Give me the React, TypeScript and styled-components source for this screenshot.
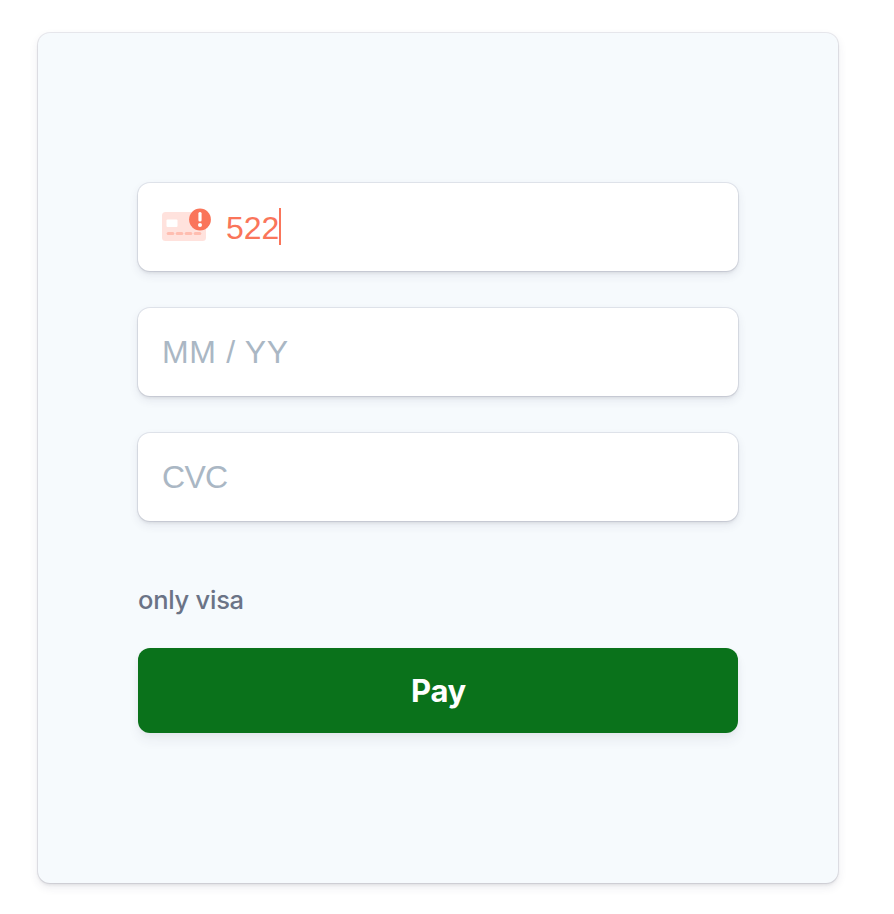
import React from "react";
import styled, { createGlobalStyle } from "styled-components";

const GlobalStyle = createGlobalStyle`
  *, *::before, *::after { box-sizing: border-box; }
  body { margin: 0; background: #ffffff; }
`;

const Page = styled.main`
  min-height: 914px;
  padding: 33px 0 0 38px;
`;

const panelShadow = `0 0 0 1px rgba(50, 50, 93, 0.1),
  0 4px 10px rgba(50, 50, 93, 0.1), 0 2px 3px rgba(0, 0, 0, 0.07)`;

const Card = styled.form`
  display: flex;
  flex-direction: column;
  width: 800px;
  height: 850px;
  padding: 150px 100px 0;
  border-radius: 12px;
  background: #f6fafd;
  box-shadow: ${panelShadow};
`;

const Fields = styled.div`
  display: flex;
  flex-direction: column;
  gap: 37px;
`;

const Field = styled.label`
  display: flex;
  align-items: center;
  height: 88px;
  padding: 0 24px;
  border-radius: 12px;
  background: #ffffff;
  box-shadow: ${panelShadow};
  font: 32px/38px "Liberation Sans", Arial, sans-serif;
`;

const Input = styled.input<{ $spacing: number }>`
  flex: 1;
  min-width: 0;
  height: 38px;
  padding: 0;
  border: 0;
  outline: 0;
  background: transparent;
  font: inherit;
  letter-spacing: ${(p) => p.$spacing}px;

  &::placeholder {
    color: #aab7c4;
    opacity: 1;
  }
`;

const CardIcon = styled.svg`
  flex: none;
  width: 50px;
  height: 36px;
  margin: 0 14px 2px 0;
`;

const InvalidNumber = styled.span`
  padding-top: 2px;
  color: #fa755a;
`;

const Caret = styled.span`
  width: 2px;
  height: 37px;
  margin-bottom: 2px;
  background: #fa755a;
`;

const Message = styled.p`
  margin: 63px 0 0;
  font: 500 25.5px/32px Inter, sans-serif;
  letter-spacing: -0.25px;
  color: #6b7386;
`;

const PayButton = styled.button`
  height: 85px;
  margin-top: 32px;
  padding: 1px 0 0 1px;
  border: 0;
  border-radius: 12px;
  background: #0a721b;
  box-shadow: 0 8px 12px rgba(50, 50, 93, 0.06), 0 2px 6px rgba(0, 0, 0, 0.04);
  color: #ffffff;
  font: 700 31px/38px Inter, sans-serif;
  letter-spacing: -0.3px;
`;

function InvalidCardIcon() {
  return (
    <CardIcon viewBox="0 0 50 36" aria-hidden="true">
      <rect x="0" y="4" width="44" height="29" rx="3.5" fill="#ffe2dd" />
      <rect x="4.5" y="11.5" width="11" height="7.5" rx="1" fill="#ffffff" />
      <g fill="#ffbdb0">
        <rect x="4.7" y="24" width="7.6" height="3" rx="1.5" />
        <rect x="13.7" y="24" width="7.6" height="3" rx="1.5" />
        <rect x="22.7" y="24" width="7.6" height="3" rx="1.5" />
        <rect x="31.7" y="24" width="7.6" height="3" rx="1.5" />
      </g>
      <circle cx="38" cy="11.5" r="10.9" fill="#fa755a" />
      <rect x="36.4" y="4" width="3.2" height="9.5" rx="1.5" fill="#ffffff" />
      <circle cx="38" cy="17" r="2" fill="#ffffff" />
    </CardIcon>
  );
}

export default function App() {
  return (
    <>
      <GlobalStyle />
      <Page>
        <Card onSubmit={(e) => e.preventDefault()}>
          <Fields>
            <Field>
              <InvalidCardIcon />
              <InvalidNumber>522</InvalidNumber>
              <Caret />
            </Field>
            <Field>
              <Input placeholder="MM / YY" $spacing={0.65} />
            </Field>
            <Field>
              <Input placeholder="CVC" $spacing={-0.7} />
            </Field>
          </Fields>
          <Message>only visa</Message>
          <PayButton type="submit">Pay</PayButton>
        </Card>
      </Page>
    </>
  );
}
